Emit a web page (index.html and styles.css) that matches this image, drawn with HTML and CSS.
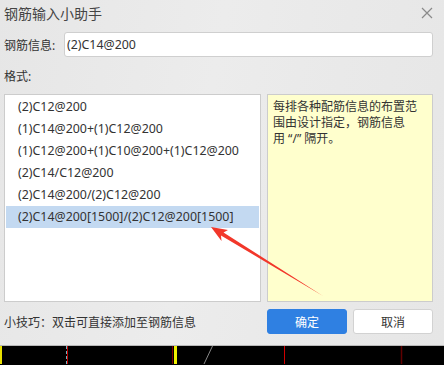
FILE: index.html
```html
<!DOCTYPE html>
<html lang="zh-CN">
  <head>
    <meta charset="UTF-8" />
    <meta name="viewport" content="width=device-width, initial-scale=1.0" />
    <title>钢筋输入小助手</title>
    <link rel="stylesheet" href="styles.css">
  </head>
  <body>
    <div class="dialog">
      <div class="title-bar">
        <span class="title">钢筋输入小助手</span>
        <svg class="close" width="12" height="12" viewBox="0 0 12 12">
          <path d="M1 1L11 11M11 1L1 11" stroke="#8a8a8a" stroke-width="1.2" fill="none" />
        </svg>
      </div>
      <div class="input-row">
        <label for="rebar">钢筋信息:</label>
        <input type="text" id="rebar" value="(2)C14@200" />
      </div>
      <div class="section-label">格式:</div>
      <div class="panels">
        <ul class="format-list">
          <li>(2)C12@200</li>
          <li>(1)C14@200+(1)C12@200</li>
          <li>(1)C12@200+(1)C10@200+(1)C12@200</li>
          <li>(2)C14/C12@200</li>
          <li>(2)C14@200/(2)C12@200</li>
          <li class="selected">(2)C14@200[1500]/(2)C12@200[1500]</li>
        </ul>
        <div class="note">每排各种配筋信息的布置范<br>围由设计指定，钢筋信息<br>用 “/” 隔开。</div>
      </div>
      <div class="footer">
        <span class="tip">小技巧：双击可直接添加至钢筋信息</span>
        <button class="btn primary">确定</button>
        <button class="btn">取消</button>
      </div>
    </div>
    <svg class="canvas-strip" width="444" height="18" viewBox="0 0 444 18">
      <rect x="0" y="0" width="2" height="18" fill="#e8e000" />
      <line x1="66.5" y1="0" x2="66.5" y2="18" stroke="#6fb3c0" stroke-width="1" stroke-dasharray="3 2" />
      <line x1="67.5" y1="0" x2="67.5" y2="18" stroke="#c00000" stroke-width="1" />
      <line x1="172.5" y1="0" x2="172.5" y2="18" stroke="#7a0000" stroke-width="1" />
      <rect x="174" y="0" width="3" height="18" fill="#f0f000" />
      <line x1="212.5" y1="0" x2="204" y2="18" stroke="#888" stroke-width="1" />
      <line x1="284.5" y1="0" x2="284.5" y2="18" stroke="#d00000" stroke-width="1" />
      <line x1="401.5" y1="0" x2="401.5" y2="18" stroke="#600000" stroke-width="1.5" />
    </svg>
    <svg class="arrow" width="444" height="365" viewBox="0 0 444 365">
      <polygon points="211,227 228,230 223.5,232.5 323,296 221,235.5 221.5,241" fill="#f2372a" />
    </svg>
  </body>
</html>
```

FILE: styles.css
```css
body {
  margin: 0;
  width: 444px;
  height: 365px;
  overflow: hidden;
  background: #000;
  font-family: "Noto Sans", "Noto Sans CJK SC", sans-serif;
  font-size: 12px;
  color: #333;
  position: relative;
}
.dialog {
  height: 346px;
  box-sizing: border-box;
  padding: 0 11px 0 4px;
  background: linear-gradient(100deg, #e6e6e6 0%, #ececec 45%, #e9e9e9 70%, #e6e6e6 100%);
  border-bottom: 1px solid #b8b8b8;
  display: flex;
  flex-direction: column;
}
.title-bar {
  height: 25px;
  display: flex;
  align-items: center;
  justify-content: space-between;
}
.title {
  font-size: 14px;
  color: #444;
}
.input-row {
  margin-top: 7px;
  display: flex;
  align-items: center;
}
.input-row label {
  width: 60px;
  font-size: 12px;
}
.input-row input {
  flex: 1;
  height: 25px;
  box-sizing: border-box;
  border: 1px solid #cfcfcf;
  border-radius: 3px;
  padding: 0 2px;
  font-family: "Noto Sans", "Noto Sans CJK SC", sans-serif;
  font-size: 12.4px;
  color: #333;
  background: #fff;
  outline: none;
}
.section-label {
  margin-top: 12px;
  line-height: 16px;
}
.panels {
  margin-top: 9px;
  height: 208px;
  display: flex;
  gap: 6px;
}
.format-list {
  width: 257px;
  box-sizing: border-box;
  margin: 0;
  padding: 1px;
  list-style: none;
  background: #fff;
  border: 1px solid #cccccc;
  font-size: 12.4px;
}
.format-list li {
  height: 22px;
  line-height: 22px;
  padding-left: 12px;
  white-space: nowrap;
}
.format-list li.selected {
  background: #c3d9f1;
}
.note {
  flex: 1;
  box-sizing: border-box;
  padding: 4px 5px;
  background: #ffffcd;
  border: 1px solid #cccccc;
  line-height: 16px;
  color: #333;
}
.footer {
  margin-top: 7px;
  display: flex;
  align-items: center;
  gap: 6px;
}
.tip {
  flex: 1;
}
.btn {
  width: 80px;
  height: 25px;
  border: 1px solid #d2d2d2;
  border-radius: 3px;
  background: #fff;
  color: #333;
  font-family: "Noto Sans", "Noto Sans CJK SC", sans-serif;
  font-size: 12px;
  cursor: pointer;
}
.btn.primary {
  background: #2f80e2;
  border-color: #2f80e2;
  color: #fff;
}
.canvas-strip {
  display: block;
}
.arrow {
  position: absolute;
  top: 0;
  left: 0;
  pointer-events: none;
}
```
